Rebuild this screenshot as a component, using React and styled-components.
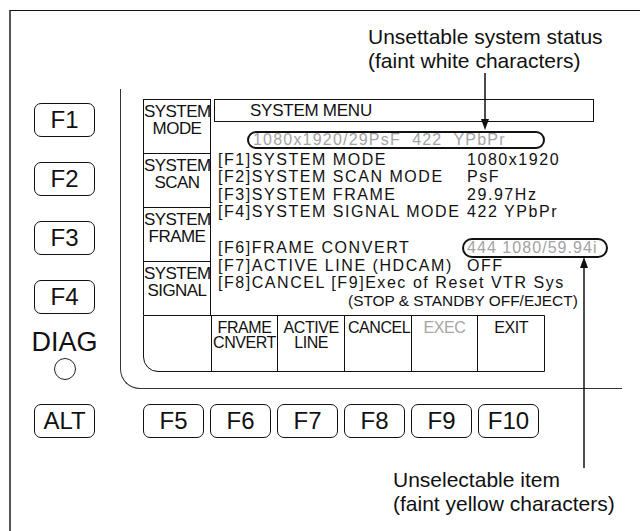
import React from 'react';
import styled, { createGlobalStyle } from 'styled-components';

const Global = createGlobalStyle`
  html, body { margin: 0; padding: 0; background: #fff; }
  body { font-family: "Liberation Sans", Arial, sans-serif; color: #111; }
  * { box-sizing: border-box; }
`;

const Page = styled.div`
  position: relative;
  width: 640px;
  height: 531px;
  overflow: hidden;
  padding: 10px 0 0 9px;
`;

const Frame = styled.div`
  height: 100%;
  border-top: 1.5px solid #111;
  border-left: 2px solid #555;
  padding-top: 77.5px;
  display: grid;
  grid-template-columns: 109px 502px;
  grid-template-rows: 300px auto;
  row-gap: 15px;
`;

const KeyColumn = styled.div`
  display: flex;
  flex-direction: column;
  align-items: center;
  padding: 14px 2px 0 0;
`;

const Key = styled.div`
  width: 61px;
  height: 34px;
  border: 1.5px solid #111;
  border-radius: 7px;
  display: flex;
  align-items: center;
  justify-content: center;
  font-size: 24px;
  line-height: 1;
  color: #111;
  margin-bottom: ${p => p.$gap || 0}px;
  flex: none;
`;

const Diag = styled.div`
  font-size: 27px;
  line-height: 27px;
  margin-top: 15px;
`;

const Lamp = styled.div`
  width: 22px;
  height: 22px;
  border: 1px solid #222;
  border-radius: 50%;
  margin-top: 2px;
`;

const Bezel = styled.div`
  border-left: 1px solid #333;
  border-bottom: 1px solid #333;
  border-bottom-left-radius: 20px;
  padding: 10px 0 16px 22px;
  display: flex;
  flex-direction: column;
`;

const TopPart = styled.div`
  display: flex;
  height: 217px;
`;

const SideMenu = styled.div`
  width: 68px;
  flex: none;
  display: flex;
  flex-direction: column;
  border: 1px solid #111;
  border-bottom: none;
`;

const SideBox = styled.div`
  flex: 1;
  border-bottom: ${p => (p.$last ? 'none' : '1px solid #111')};
  font-size: 17px;
  line-height: 17px;
  letter-spacing: -0.55px;
  text-align: center;
  padding-top: 3px;
  white-space: nowrap;
`;

const MainArea = styled.div`
  flex: 1;
  display: flex;
  flex-direction: column;
  position: relative;
`;

const TitleBox = styled.div`
  width: 380px;
  height: 23px;
  margin-left: 3px;
  border: 1px solid #111;
  font-size: 17px;
  letter-spacing: -0.25px;
  line-height: 21px;
  padding-left: 35px;
`;

const Pill = styled.div`
  display: inline-flex;
  align-items: center;
  height: ${p => p.$h}px;
  border: 2px solid #111;
  border-radius: 10px;
  color: #a3a3a3;
  font-size: 16px;
  letter-spacing: ${p => p.$ls}px;
  white-space: pre;
  line-height: 1;
`;

const StatusPill = styled(Pill)`
  width: 298px;
  margin: 9px 0 0 36px;
  padding-left: 4px;
`;

const ValuePill = styled(Pill)`
  margin: -1.5px 0 -1.5px -5px;
  padding: 0 0 0 3px;
  width: 146px;
`;

const Lines = styled.div`
  margin-top: 2.4px;
  padding-left: 7px;
  display: grid;
  grid-template-columns: 249px auto;
  font-size: 16px;
  letter-spacing: 1.55px;
  line-height: 17.5px;
  white-space: pre;
`;

const Cell = styled.div`
  grid-column: ${p => (p.$span ? '1 / span 2' : 'auto')};
  margin-top: ${p => p.$mt || 0}px;
  display: flex;
  align-items: center;
`;

const Note = styled.div`
  grid-column: 1 / span 2;
  margin-top: 0.5px;
  padding-left: 130px;
  font-size: 15.4px;
  letter-spacing: 0px;
  line-height: 17px;
`;

const ButtonRow = styled.div`
  width: 402px;
  height: 57px;
  display: grid;
  grid-template-columns: repeat(6, 1fr);
  border: 1px solid #111;
  border-bottom-left-radius: 15px;
`;

const SoftButton = styled.div`
  border-left: ${p => (p.$first ? 'none' : '1.3px solid #111')};
  font-size: 16px;
  letter-spacing: -0.45px;
  line-height: 15px;
  padding-top: 4px;
  padding-left: ${p => (p.$align === 'left' ? 3 : 0)}px;
  text-align: ${p => p.$align || 'center'};
  color: ${p => (p.$dim ? '#a6a6a6' : '#111')};
  white-space: nowrap;
`;

const FKeyRow = styled.div`
  display: flex;
  gap: 6px;
  padding-left: 23px;
`;

const BottomLeft = styled.div`
  display: flex;
  justify-content: center;
  padding-right: 2px;
`;

const Callout = styled.div`
  position: absolute;
  left: ${p => p.$x}px;
  top: ${p => p.$y}px;
  font-size: 21px;
  line-height: 23.5px;
  color: #111;
  white-space: nowrap;
`;

const Arrows = styled.svg`
  position: absolute;
  left: 0;
  top: 0;
  pointer-events: none;
`;

export default function App() {
  const sideItems = [
    ['SYSTEM', 'MODE'],
    ['SYSTEM', 'SCAN'],
    ['SYSTEM', 'FRAME'],
    ['SYSTEM', 'SIGNAL'],
  ];
  const softButtons = [
    { t: [''] },
    { t: ['FRAME', 'CNVERT'] },
    { t: ['ACTIVE', 'LINE'] },
    { t: ['CANCEL'], align: 'left' },
    { t: ['EXEC'], dim: true },
    { t: ['EXIT'] },
  ];
  return (
    <Page>
      <Global />
      <Frame>
        <KeyColumn>
          <Key $gap={25}>F1</Key>
          <Key $gap={25}>F2</Key>
          <Key $gap={25}>F3</Key>
          <Key>F4</Key>
          <Diag>DIAG</Diag>
          <Lamp />
        </KeyColumn>
        <Bezel>
          <TopPart>
            <SideMenu>
              {sideItems.map((s, i) => (
                <SideBox key={i} $last={i === 3}>
                  {s[0]}
                  <br />
                  {s[1]}
                </SideBox>
              ))}
            </SideMenu>
            <MainArea>
              <TitleBox>SYSTEM MENU</TitleBox>
              <div>
                <StatusPill $h={18} $ls={1.2}>1080x1920/29PsF  422  YPbPr</StatusPill>
              </div>
              <Lines>
                <Cell>[F1]SYSTEM MODE</Cell>
                <Cell>1080x1920</Cell>
                <Cell>[F2]SYSTEM SCAN MODE</Cell>
                <Cell>PsF</Cell>
                <Cell>[F3]SYSTEM FRAME</Cell>
                <Cell>29.97Hz</Cell>
                <Cell>[F4]SYSTEM SIGNAL MODE</Cell>
                <Cell>422 YPbPr</Cell>
                <Cell $mt={18.5}>[F6]FRAME CONVERT</Cell>
                <Cell $mt={18.5}>
                  <ValuePill $h={20} $ls={1.05}>444 1080/59.94i</ValuePill>
                </Cell>
                <Cell>[F7]ACTIVE LINE (HDCAM)</Cell>
                <Cell>OFF</Cell>
                <Cell $span>[F8]CANCEL [F9]Exec of Reset VTR Sys</Cell>
                <Note>(STOP &amp; STANDBY OFF/EJECT)</Note>
              </Lines>
            </MainArea>
          </TopPart>
          <ButtonRow>
            {softButtons.map((b, i) => (
              <SoftButton key={i} $first={i === 0} $align={b.align} $dim={b.dim}>
                {b.t.map((l, j) => (
                  <div key={j}>{l}</div>
                ))}
              </SoftButton>
            ))}
          </ButtonRow>
        </Bezel>
        <BottomLeft>
          <Key>ALT</Key>
        </BottomLeft>
        <FKeyRow>
          {['F5', 'F6', 'F7', 'F8', 'F9', 'F10'].map(k => (
            <Key key={k}>{k}</Key>
          ))}
        </FKeyRow>
      </Frame>

      <Callout $x={368} $y={25}>
        Unsettable system status
        <br />
        (faint white characters)
      </Callout>
      <Callout $x={393} $y={468}>
        Unselectable item
        <br />
        (faint yellow characters)
      </Callout>

      <Arrows width="640" height="531" viewBox="0 0 640 531">
        <line x1="485" y1="73" x2="485" y2="121" stroke="#111" strokeWidth="1.5" />
        <polygon points="481,119 489,119 485,130" fill="#111" />
        <line x1="584" y1="468" x2="584" y2="266" stroke="#111" strokeWidth="1.5" />
        <polygon points="580,268 588,268 584,257" fill="#111" />
      </Arrows>
    </Page>
  );
}
